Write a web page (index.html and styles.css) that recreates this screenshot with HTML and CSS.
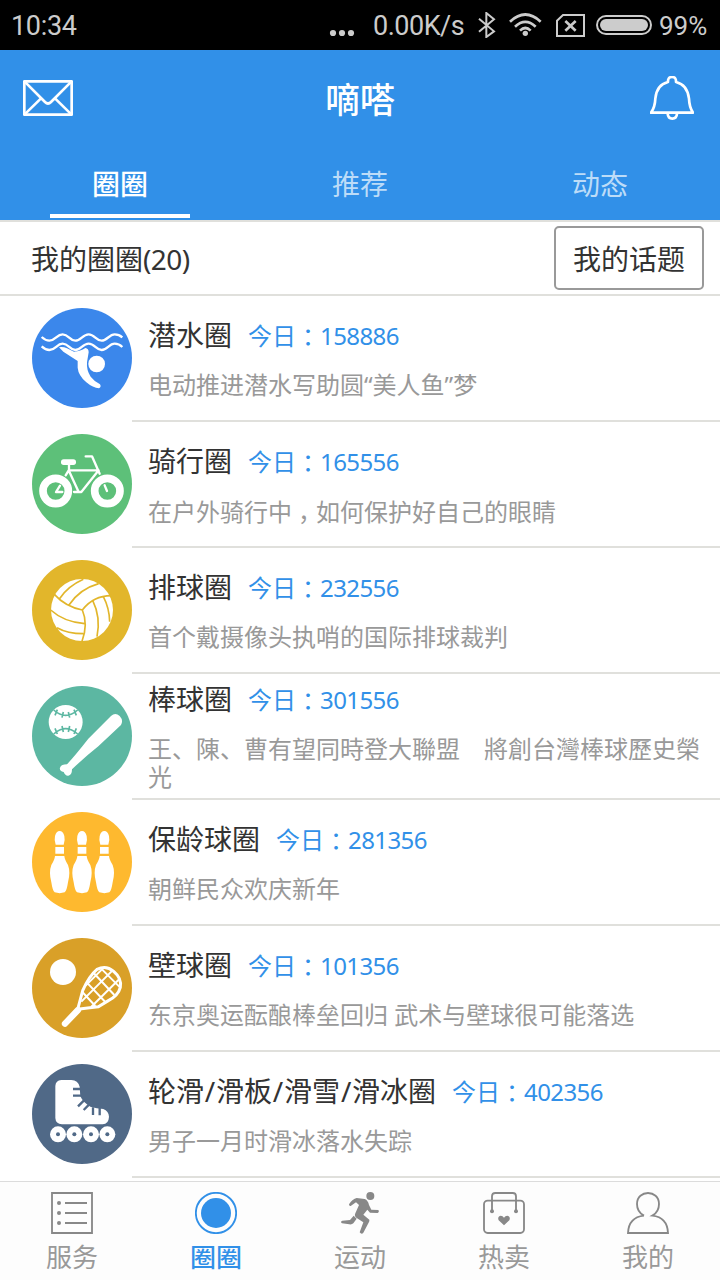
FILE: index.html
```html
<!DOCTYPE html>
<html lang="zh-CN">
<head>
<meta charset="utf-8">
<title>嘀嗒</title>
<link rel="stylesheet" href="styles.css">
</head>
<body>
<div class="app">
  <div class="status">
    <span class="clock">10:34</span>
    <svg class="dots" viewBox="0 0 26 8" width="26" height="8"><circle cx="4" cy="4" r="3.1"/><circle cx="13" cy="4" r="3.1"/><circle cx="22" cy="4" r="3.1"/></svg>
    <span class="speed">0.00K/s</span>
    <svg class="bt" viewBox="354 36 54 78" width="18" height="26"><path d="M357 56 L402 94 L379 111 V39 L402 58 L357 95"/></svg>
    <svg class="wifi" viewBox="447 36 99 75" width="33" height="25"><path d="M450 65 Q496 22 542 65 M465 80 Q496 51 527 80 M480 92 Q496 76 512 92"/><circle cx="496" cy="100" r="8"/></svg>
    <svg class="sim" viewBox="588 39 87 69" width="29" height="23"><path d="M609 42 H672 V105 H591 V59 Z"/><path class="x" d="M616 60 L647 89 M647 60 L616 89"/></svg>
    <svg class="battery" viewBox="708 45 168 60" width="56" height="20"><rect x="711" y="48" width="162" height="54" rx="27"/><rect class="level" x="720" y="57" width="144" height="36" rx="18"/></svg>
    <span class="percent">99%</span>
  </div>

  <header class="header">
    <div class="titlebar">
      <svg class="mail" viewBox="69 240 150 108" width="50" height="36"><rect x="73" y="244" width="142" height="100"/><path d="M74 245 L135 306 Q144 315 153 306 L214 245 M74 343 L123 295 M214 343 L165 295"/></svg>
      <h1 class="title">嘀嗒</h1>
      <svg class="bell" viewBox="870 228 132 132" width="44" height="44"><path d="M873 338 Q885 322 886 296 Q890 254 924 246 Q923 231 936 231 Q949 231 948 246 Q982 254 987 296 Q988 322 999 338 Z M923 341 Q924 356 937 356 Q950 356 951 341"/></svg>
    </div>
    <nav class="tabs">
      <a class="tab active">圈圈</a>
      <a class="tab">推荐</a>
      <a class="tab">动态</a>
    </nav>
  </header>

  <div class="mine">
    <span class="count">我的圈圈<span class="num">(20)</span></span>
    <button class="topics">我的话题</button>
  </div>

  <main class="list">
    <article class="row">
      <svg class="icon" viewBox="96 279 300 300"><circle class="diving" cx="246" cy="429" r="150"/>
        <path class="wave" d="M125 366 Q137 377 148 377 C167 377 170 358 188 358 S209 377 226 377 S248 358 266 358 S288 377 305 377 S327 358 344 358 Q357 358 367 367 M125 394 Q137 405 148 405 C167 405 170 386 188 386 S209 405 226 405 S248 386 266 386 S288 405 305 405 S327 386 344 386 Q357 386 367 396"/>
        <path class="fill" d="M177 397 Q188 394 201 400 L222 410 Q242 409 256 399 Q266 400 266 412 L261 442 Q259 466 272 485 Q283 499 300 508 Q305 516 297 520 Q279 519 259 502 Q235 481 233 458 L233 438 L190 410 Z"/><circle class="fill" cx="290" cy="447" r="25"/></svg>
      <div class="info">
        <div class="head"><h2 class="name">潜水圈</h2><span class="today">今日<span class="mid">：</span><span class="num">158886</span></span></div>
        <p class="desc">电动推进潜水写助圆“美人鱼”梦</p>
      </div>
    </article>
    <article class="row">
      <svg class="icon" viewBox="36 27 300 300"><circle class="cycling" cx="186" cy="177" r="150"/>
        <g class="tyre"><circle cx="107" cy="198" r="38"/><circle cx="262" cy="198" r="38"/></g>
        <path class="frame" d="M120 182 L108 201 H127 M254 181 L261 198 M137 151 L146 136 H236 L184 201 H162 M146 136 L176 201 M147 112 V136 M197 94 H216 L239 146"/>
        <rect class="fill" x="123" y="103" width="45" height="17" rx="8"/></svg>
      <div class="info">
        <div class="head"><h2 class="name">骑行圈</h2><span class="today">今日<span class="mid">：</span><span class="num">165556</span></span></div>
        <p class="desc">在户外骑行中<span class="mid">，</span>如何保护好自己的眼睛</p>
      </div>
    </article>
    <article class="row">
      <svg class="icon" viewBox="36 30 300 300"><circle class="volley" cx="186" cy="180" r="150"/><circle class="fill" cx="186" cy="180" r="93"/>
        <path class="seam volley-seam" d="M103 133 Q135 169 187 180 Q221 136 276 137 M118 147 Q143 109 190 88 M147 165 Q179 117 236 101 M92 180 Q132 216 194 221 M111 233 Q143 251 190 251 M187 180 Q205 222 186 274 M218 151 Q243 202 231 260 M250 140 Q268 174 269 215"/></svg>
      <div class="info">
        <div class="head"><h2 class="name">排球圈</h2><span class="today">今日<span class="mid">：</span><span class="num">232556</span></span></div>
        <p class="desc">首个戴摄像头执哨的国际排球裁判</p>
      </div>
    </article>
    <article class="row">
      <svg class="icon" viewBox="36 30 300 300"><circle class="baseball" cx="186" cy="180" r="150"/><circle class="fill" cx="137" cy="138" r="51"/>
        <path class="seam baseball-seam" d="M101 102 Q137 134 173 102 M101 174 Q137 142 173 174 M112 101 L105 118 M130 108 L126 125 M145 108 L149 125 M162 101 L169 118 M105 157 L112 174 M126 150 L130 168 M149 150 L145 168 M169 157 L162 174"/>
        <path class="fill" d="M273 120 Q286 108 299 120 Q311 133 303 147 L235 211 Q190 247 156 280 Q156 297 145 299 Q137 301 131 288 Q117 284 120 275 Q124 265 141 265 Q169 234 205 188 Z"/></svg>
      <div class="info">
        <div class="head"><h2 class="name">棒球圈</h2><span class="today">今日<span class="mid">：</span><span class="num">301556</span></span></div>
        <p class="desc">王、陳、曹有望同時登大聯盟　將創台灣棒球歷史榮光</p>
      </div>
    </article>
    <article class="row">
      <svg class="icon" viewBox="36 30 300 300"><circle class="bowling" cx="186" cy="180" r="150"/>
        <g class="fill"><path id="pin" d="M107 128 Q102 116 105 102 Q109 87 119 87 Q129 87 133 102 Q136 116 131 128 Z M106 135 H132 V155 H106 Z M105 162 H133 Q134 173 144 189 Q152 210 144 241 Q140 268 134 271 Q119 276 104 271 Q98 268 94 241 Q86 210 94 189 Q104 173 105 162 Z"/><use href="#pin" x="67"/><use href="#pin" x="134"/></g></svg>
      <div class="info">
        <div class="head"><h2 class="name">保龄球圈</h2><span class="today">今日<span class="mid">：</span><span class="num">281356</span></span></div>
        <p class="desc">朝鲜民众欢庆新年</p>
      </div>
    </article>
    <article class="row">
      <svg class="icon" viewBox="36 30 300 300"><circle class="squash" cx="186" cy="180" r="150"/><circle class="fill" cx="129" cy="132" r="39"/>
        <path class="racket" d="M173 244 L188 188 Q207 144 231 124 Q258 110 281 130 Q306 151 301 178 Q295 202 265 218 L235 236 Q202 239 173 244 Z"/>
        <path class="strings" d="M221 135 L283 201 M200 163 L256 222 M187 192 L226 234 M243 121 L300 178 M277 128 L184 221 M299 152 L214 236 M249 121 L197 173"/>
        <path class="handle" d="M174 246 L135 287"/></svg>
      <div class="info">
        <div class="head"><h2 class="name">壁球圈</h2><span class="today">今日<span class="mid">：</span><span class="num">101356</span></span></div>
        <p class="desc">东京奥运酝酿棒垒回归 武术与壁球很可能落选</p>
      </div>
    </article>
    <article class="row">
      <svg class="icon" viewBox="36 30 300 300"><circle class="skating" cx="186" cy="180" r="150"/>
        <path class="fill" d="M106 96 Q107 79 124 78 H154 Q174 79 179 98 L181 127 Q189 145 211 158 Q230 163 250 165 Q266 171 267 188 Q266 210 248 211 H126 Q107 210 106 192 Z"/>
        <path class="lace" d="M159 105 H183 M159 125 H183 M174 157 L192 139 M191 168 L207 152 M219 183 V160 M239 184 V162"/>
        <g class="fill"><circle cx="114" cy="241" r="24"/><circle cx="163" cy="241" r="24"/><circle cx="213" cy="241" r="24"/><circle cx="262" cy="241" r="24"/></g>
        <g class="skating"><circle cx="114" cy="241" r="6"/><circle cx="163" cy="241" r="6"/><circle cx="213" cy="241" r="6"/><circle cx="262" cy="241" r="6"/></g></svg>
      <div class="info">
        <div class="head"><h2 class="name">轮滑<i>/</i>滑板<i>/</i>滑雪<i>/</i>滑冰圈</h2><span class="today">今日<span class="mid">：</span><span class="num">402356</span></span></div>
        <p class="desc">男子一月时滑冰落水失踪</p>
      </div>
    </article>
  </main>

  <nav class="bottom">
    <a class="item"><svg class="glyph" viewBox="153 66 126 126"><path d="M156 69 H276 V189 H156 Z M195 99 H261 M195 129 H261 M195 159 H261"/><g class="solid"><circle cx="177" cy="99" r="6"/><circle cx="177" cy="129" r="6"/><circle cx="177" cy="159" r="6"/></g></svg><span>服务</span></a>
    <a class="item current"><svg class="glyph" viewBox="585 66 126 126"><circle cx="648" cy="129" r="60.5"/><circle class="solid" cx="648" cy="129" r="45"/></svg><span>圈圈</span></a>
    <a class="item"><svg class="glyph" viewBox="-63 66 126 126"><g class="solid"><circle cx="31" cy="78" r="12"/><path d="M-33 103 Q-22 86 -10 84 L14 87 Q24 91 27 105 L34 119 L55 120 Q59 125 53 129 L30 128 L22 119 L10 134 L28 149 Q29 154 25 160 L10 188 Q5 195 -1 187 L10 157 L-11 143 Q-18 139 -14 130 L-3 105 L-12 97 L-28 108 Q-33 109 -33 103 Z M-19 137 L-10 146 L-20 160 Q-24 164 -32 163 L-54 160 Q-60 155 -53 152 L-30 150 Z"/></g></svg><span>运动</span></a>
    <a class="item"><svg class="glyph" viewBox="369 66 126 126"><rect x="372" y="92" width="120" height="97" rx="11"/><path d="M396 123 V79 Q396 69 406 69 H458 Q468 69 468 79 V123"/><g class="solid"><circle cx="396" cy="124" r="6"/><circle cx="468" cy="124" r="6"/><path d="M432 166 L416 151 Q412 142 419 138 Q427 136 432 143 Q437 136 445 138 Q452 142 448 151 Z"/></g></svg><span>热卖</span></a>
    <a class="item"><svg class="glyph" viewBox="801 66 126 126"><path d="M852 137 Q831 126 831 102 C831 58 897 58 897 102 Q897 126 877 137 Q922 142 924 189 H804 Q806 142 852 137"/></svg><span>我的</span></a>
  </nav>
</div>
</body>
</html>
```

FILE: styles.css
```css
* { box-sizing: border-box; }

body {
  margin: 0;
  background: #fff;
  color: #333;
  font-family: "Noto Sans", "Noto Sans CJK SC", sans-serif;
}

.app {
  width: 720px;
  height: 1280px;
  display: flex;
  flex-direction: column;
  overflow: hidden;
}

h1, h2, p { margin: 0; font-weight: 400; }

svg { display: block; flex: none; fill: none; }

/* Status bar */
.status {
  height: 50px;
  flex: none;
  display: flex;
  align-items: center;
  padding: 0 12px 0 11px;
  background: #000;
  color: #ccc;
  font: 27px/50px Roboto, sans-serif;
  white-space: nowrap;
}
.status svg { stroke: #ccc; stroke-width: 6; }
.clock { width: 318px; padding-top: 2px; letter-spacing: -0.3px; }
.dots { margin-top: 16px; }
.status .dots circle { fill: #ccc; stroke: none; }
.speed { width: 92px; margin-left: 18px; padding-top: 2px; letter-spacing: -0.5px; }
.bt { margin-left: 13px; }
.wifi { margin-left: 13px; margin-top: -2px; }
.wifi circle { fill: #ccc; stroke: none; }
.wifi path { stroke-width: 8; }
.sim { margin-left: 14px; }
.sim .x { stroke-width: 8; }
.battery { margin-left: 11px; }
.battery .level { fill: #ccc; stroke: none; }
.percent { margin-left: 7px; padding-top: 2px; font-size: 26px; }

/* Header */
.header { height: 170px; flex: none; background: #3190e8; color: #fff; }
.titlebar {
  height: 96px;
  display: flex;
  align-items: center;
  justify-content: space-between;
  padding: 0 26px 0 23px;
}
.title { font-size: 35px; line-height: 50px; font-weight: 500; padding: 4px 3px 0 0; }
.titlebar svg { stroke: #fff; stroke-width: 8; stroke-linejoin: round; }
.tabs { height: 74px; display: flex; }
.tab {
  flex: 1;
  display: flex;
  justify-content: center;
  margin: 0 50px;
  height: 72px;
  padding-top: 18px;
  font-size: 28px;
  line-height: 40px;
  color: #bcdcf8;
}
.tab.active { color: #fff; border-bottom: 4px solid #fff; font-weight: 500; }

/* My circles */
.mine {
  height: 76px;
  flex: none;
  display: flex;
  align-items: center;
  justify-content: space-between;
  padding: 0 16px 0 31px;
  border: solid #e0e0dc;
  border-width: 2px 0;
  font-size: 28px;
}
.topics {
  width: 150px;
  height: 64px;
  padding: 0;
  border: 2px solid #999;
  border-radius: 5px;
  background: #fff;
  color: #333;
  font: inherit;
}
.num { letter-spacing: -0.6px; }

/* Circle list */
.list { flex: 1; min-height: 0; overflow: hidden; background: #fff; }
.row { height: 126px; display: flex; padding-left: 32px; }
.icon { width: 100px; height: 100px; margin-top: 12px; }
.info {
  flex: 1;
  min-width: 0;
  display: flex;
  flex-direction: column;
  justify-content: center;
  gap: 18px;
  padding: 0 16px;
  border-bottom: 2px solid #e0e0dc;
}
.head { display: flex; gap: 16px; height: 36px; line-height: 36px; white-space: nowrap; }
.name { font-size: 28px; }
.name i { font-style: normal; padding: 0 0.8px; }
.today { font-size: 24px; line-height: 36px; color: #3190e8; }
.desc { font-size: 24px; line-height: 28px; color: #999; }
/* Half-width punctuation, centred in a full-width cell */
.mid {
  padding: 0 6px;
  font-family: "Noto Sans CJK SC", sans-serif;
  font-feature-settings: "halt";
}

.fill { fill: #fff; }
.diving { fill: #3b87eb; }
.cycling { fill: #5dc079; }
.volley { fill: #e2b62b; }
.baseball { fill: #5cb7a2; }
.bowling { fill: #feb92f; }
.squash { fill: #d9a028; }
.skating { fill: #506987; }
.wave { stroke: #fff; stroke-width: 7; }
.tyre { stroke: #fff; stroke-width: 23; }
.frame { stroke: #fff; stroke-width: 7; stroke-linejoin: round; stroke-linecap: round; }
.seam { stroke-width: 5; }
.volley-seam { stroke: #e2b62b; }
.baseball-seam { stroke: #5cb7a2; }
.racket { stroke: #fff; stroke-width: 9; }
.strings { stroke: #fff; stroke-width: 6; }
.handle { stroke: #fff; stroke-width: 19; stroke-linecap: round; }
.lace { stroke: #506987; stroke-width: 7; }

/* Bottom navigation */
.bottom {
  height: 99px;
  flex: none;
  display: flex;
  border-top: 1px solid #dcdcdc;
  background: #fdfdfd;
}
.item {
  flex: 1;
  display: flex;
  flex-direction: column;
  align-items: center;
  padding-top: 10px;
  font-size: 26px;
  line-height: 36px;
  color: #999;
}
.item span { margin-top: 5px; }
.glyph { width: 42px; height: 42px; stroke: #888; stroke-width: 5.5; }
.glyph .solid { fill: #888; stroke: none; }
.current { color: #3190e8; font-weight: 500; }
.current .glyph { stroke: #3190e8; }
.current .glyph .solid { fill: #3190e8; }
```
